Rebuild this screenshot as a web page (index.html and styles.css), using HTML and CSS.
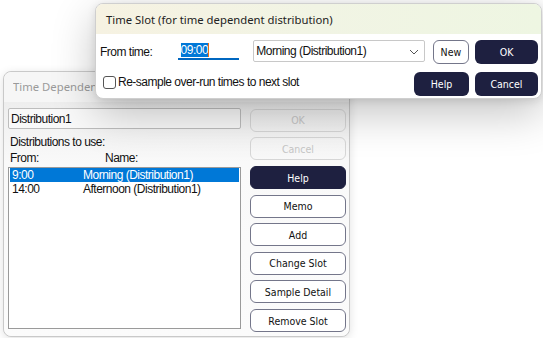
FILE: index.html
```html
<!DOCTYPE html>
<html>
<head>
<meta charset="utf-8">
<link rel="stylesheet" href="styles.css">
</head>
<body>
<div class="desktop">
  <div class="win back">
    <div class="back-title"><span class="clip">Time Dependent Distribution</span></div>
    <div class="back-body">
      <div class="left-col">
        <div class="namefield">Distribution1</div>
        <div class="lbl dist-lbl">Distributions to use:</div>
        <div class="lbl heads"><span class="c1">From:</span><span>Name:</span></div>
        <div class="listbox">
          <div class="row sel"><span class="c1">9:00</span><span>Morning (Distribution1)</span></div>
          <div class="row"><span class="c1">14:00</span><span>Afternoon (Distribution1)</span></div>
        </div>
      </div>
      <div class="btn-col">
        <div class="btn disabled">OK</div>
        <div class="btn disabled">Cancel</div>
        <div class="btn dark">Help</div>
        <div class="btn">Memo</div>
        <div class="btn">Add</div>
        <div class="btn">Change Slot</div>
        <div class="btn">Sample Detail</div>
        <div class="btn">Remove Slot</div>
      </div>
    </div>
  </div>

  <div class="win front">
    <div class="front-title">Time Slot (for time dependent distribution)</div>
    <div class="front-body">
      <div class="frow">
        <div class="from-lbl">From time:</div>
        <div class="timefield"><span class="selected">09:00</span><span class="caret"></span></div>
        <div class="combo"><span>Morning (Distribution1)</span>
          <svg class="chev" width="10" height="6" viewBox="0 0 10 6"><polyline points="1,1 5,5 9,1" fill="none" stroke="#555" stroke-width="1"/></svg>
        </div>
        <div class="fbtn new">New</div>
        <div class="fbtn darkb ok">OK</div>
      </div>
      <div class="frow row2">
        <div class="chk"></div>
        <div class="chk-lbl">Re-sample over-run times to next slot</div>
        <div class="spacer"></div>
        <div class="fbtn darkb help">Help</div>
        <div class="fbtn darkb ok">Cancel</div>
      </div>
    </div>
  </div>
</div>
</body>
</html>
```

FILE: styles.css
```css
html, body {
  margin: 0;
  padding: 0;
  background: #ffffff;
}
.desktop {
  position: relative;
  width: 543px;
  height: 338px;
  overflow: hidden;
  font-family: "Liberation Sans", Arial, sans-serif;
  letter-spacing: -0.5px;
}
.win {
  position: absolute;
  box-sizing: border-box;
}
/* background dialog */
.back {
  left: 3px;
  top: 71px;
  width: 347px;
  height: 266px;
  border: 1px solid #c9c9c9;
  border-radius: 8px;
  background: #f9f9f9;
  box-shadow: 0 2px 10px rgba(0,0,0,0.12);
  display: flex;
  flex-direction: column;
}
.back-title {
  height: 31px;
  padding-left: 9px;
  display: flex;
  align-items: center;
  font-family: "Noto Sans", "Open Sans", sans-serif;
  font-size: 11.3px;
  letter-spacing: 0;
  color: #9a9a9a;
  background: #f6f6f6;
  border-radius: 8px 8px 0 0;
}
.clip {
  width: 82px;
  overflow: hidden;
  white-space: nowrap;
}
.back-body {
  flex: 1;
  display: flex;
  padding: 6px 2px 4px 4px;
  gap: 9px;
  background: linear-gradient(180deg, #eeeeee 0px, #f9f9f9 60px, #fbfbfb 100%);
  border-radius: 0 0 8px 8px;
}
.left-col {
  width: 233px;
  display: flex;
  flex-direction: column;
}
.namefield {
  height: 21px;
  box-sizing: border-box;
  border: 1px solid #bdbdbd;
  border-radius: 2px;
  background: #f9f9f9;
  padding-left: 2px;
  font-size: 12px;
  line-height: 20px;
  color: #111;
}
.lbl {
  font-size: 12px;
  color: #111;
  padding-left: 2px;
  line-height: 14px;
}
.dist-lbl { margin-top: 6px; }
.heads { margin-top: 2px; display: flex; }
.c1 { width: 71px; display: inline-block; flex: none; }
.heads .c1 { width: 95px; }
.listbox {
  margin-top: 2px;
  height: 162px;
  box-sizing: border-box;
  border: 1px solid #9a9a9a;
  background: #ffffff;
  padding: 0 1px;
}
.row {
  display: flex;
  height: 14px;
  line-height: 15px;
  font-size: 12px;
  color: #111;
  padding-left: 2px;
}
.row.sel {
  background: #0078d7;
  color: #ffffff;
}
.btn-col {
  width: 96px;
  display: flex;
  flex-direction: column;
  gap: 5.6px;
  padding-top: 1px;
}
.btn {
  height: 23px;
  box-sizing: border-box;
  border: 1.5px solid #74768a;
  border-radius: 6px;
  background: #ffffff;
  display: flex;
  align-items: center;
  justify-content: center;
  font-family: "DejaVu Sans Condensed", "DejaVu Sans", sans-serif;
  font-size: 10.5px;
  letter-spacing: 0;
  color: #111;
}
.btn.disabled {
  border-color: #d6d6d6;
  background: transparent;
  color: #c6c6c6;
}
.btn.dark {
  background: #1e2040;
  border-color: #1e2040;
  color: #ffffff;
}
/* front dialog */
.front {
  left: 95px;
  top: 3px;
  width: 447px;
  height: 96px;
  border: 1px solid #cfcfcf;
  border-radius: 8px;
  background: #ffffff;
  box-shadow: 0 14px 44px rgba(0,0,0,0.24), 0 2px 8px rgba(0,0,0,0.10);
  display: flex;
  flex-direction: column;
  overflow: hidden;
}
.front-title {
  height: 30px;
  flex: none;
  padding-left: 10px;
  display: flex;
  align-items: center;
  font-family: "Noto Sans", "Open Sans", sans-serif;
  font-size: 11.3px;
  letter-spacing: 0;
  color: #222;
  background: linear-gradient(90deg, #f6f2e2 0%, #f1f4e4 50%, #eef6e2 100%);
}
.front-body {
  flex: 1;
  padding: 6px 3px 0 4px;
  display: flex;
  flex-direction: column;
  gap: 8px;
}
.frow {
  display: flex;
  align-items: center;
  height: 24px;
}
.from-lbl {
  width: 78px;
  font-size: 12px;
  color: #111;
}
.timefield {
  width: 62px;
  height: 19px;
  box-sizing: border-box;
  border-bottom: 2px solid #0067c0;
  background: #fff;
  display: flex;
  align-items: center;
  padding-left: 3px;
  font-size: 12px;
  margin-top: -3px;
}
.selected {
  background: #0078d7;
  color: #fff;
  line-height: 14px;
}
.caret {
  width: 1px;
  height: 14px;
  background: #f07010;
}
.combo {
  margin-left: 14px;
  width: 172px;
  height: 22px;
  box-sizing: border-box;
  border: 1px solid #c8c8c8;
  border-radius: 2px;
  display: flex;
  align-items: center;
  justify-content: space-between;
  padding: 0 5px 0 2px;
  font-size: 12px;
  color: #111;
  margin-top: -2px;
}
.chev { margin-top: 1px; }
.fbtn {
  height: 24px;
  box-sizing: border-box;
  border-radius: 6px;
  display: flex;
  align-items: center;
  justify-content: center;
  font-family: "DejaVu Sans Condensed", "DejaVu Sans", sans-serif;
  font-size: 10.5px;
  letter-spacing: 0;
}
.new {
  margin-left: 8px;
  width: 37px;
  border: 1.5px solid #74768a;
  color: #111;
  background: #fff;
}
.darkb {
  background: #1e2040;
  color: #fff;
}
.ok {
  margin-left: 6px;
  width: 63px;
}
.help { width: 55px; }
.chk {
  margin-left: 3px;
  width: 13px;
  height: 13px;
  box-sizing: border-box;
  border: 1px solid #555;
  border-radius: 3px;
  margin-top: -3px;
}
.chk-lbl {
  margin-left: 2px;
  font-size: 12px;
  color: #111;
  margin-top: -4px;
}
.spacer { flex: 1; }
```
